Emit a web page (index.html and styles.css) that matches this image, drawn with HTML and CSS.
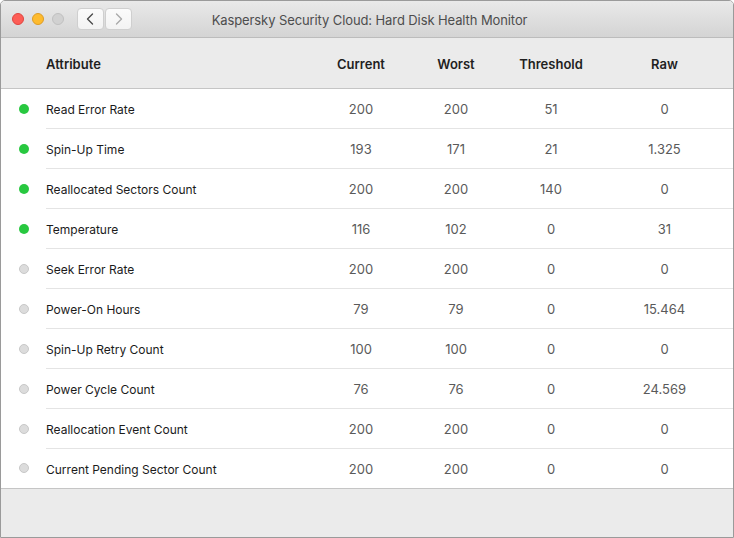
FILE: index.html
```html
<!DOCTYPE html>
<html lang="en">
<head>
<meta charset="utf-8">
<title>Kaspersky Security Cloud: Hard Disk Health Monitor</title>
<link rel="stylesheet" href="styles.css">
</head>
<body>
<div class="window">
  <div class="titlebar">
    <div class="controls">
      <div class="lights">
        <span class="light red"></span>
        <span class="light yellow"></span>
        <span class="light gray"></span>
      </div>
      <div class="nav">
        <span class="navbtn">
          <svg width="27" height="22" viewBox="0 0 27 22"><path d="M15.5 6 L10.5 11 L15.5 16" fill="none" stroke="#4a4a4a" stroke-width="1.4" stroke-linecap="round" stroke-linejoin="round"/></svg>
        </span>
        <span class="navbtn">
          <svg width="27" height="22" viewBox="0 0 27 22"><path d="M11.5 6 L16.5 11 L11.5 16" fill="none" stroke="#a9a9a9" stroke-width="1.4" stroke-linecap="round" stroke-linejoin="round"/></svg>
        </span>
      </div>
    </div>
    <div class="title">Kaspersky Security Cloud: Hard Disk Health Monitor</div>
    <div></div>
  </div>

  <div class="thead">
    <div class="dotcell"></div>
    <div class="cells">
      <div class="c attr">Attribute</div>
      <div class="c num">Current</div>
      <div class="c num">Worst</div>
      <div class="c num">Threshold</div>
      <div class="c num">Raw</div>
    </div>
  </div>

  <div class="tbody">
    <div class="row"><div class="dotcell"><span class="dot ok"></span></div><div class="cells"><div class="c attr">Read Error Rate</div><div class="c num">200</div><div class="c num">200</div><div class="c num">51</div><div class="c num">0</div></div></div>
    <div class="row"><div class="dotcell"><span class="dot ok"></span></div><div class="cells"><div class="c attr">Spin-Up Time</div><div class="c num">193</div><div class="c num">171</div><div class="c num">21</div><div class="c num">1.325</div></div></div>
    <div class="row"><div class="dotcell"><span class="dot ok"></span></div><div class="cells"><div class="c attr">Reallocated Sectors Count</div><div class="c num">200</div><div class="c num">200</div><div class="c num">140</div><div class="c num">0</div></div></div>
    <div class="row"><div class="dotcell"><span class="dot ok"></span></div><div class="cells"><div class="c attr">Temperature</div><div class="c num">116</div><div class="c num">102</div><div class="c num">0</div><div class="c num">31</div></div></div>
    <div class="row"><div class="dotcell"><span class="dot off"></span></div><div class="cells"><div class="c attr">Seek Error Rate</div><div class="c num">200</div><div class="c num">200</div><div class="c num">0</div><div class="c num">0</div></div></div>
    <div class="row"><div class="dotcell"><span class="dot off"></span></div><div class="cells"><div class="c attr">Power-On Hours</div><div class="c num">79</div><div class="c num">79</div><div class="c num">0</div><div class="c num">15.464</div></div></div>
    <div class="row"><div class="dotcell"><span class="dot off"></span></div><div class="cells"><div class="c attr">Spin-Up Retry Count</div><div class="c num">100</div><div class="c num">100</div><div class="c num">0</div><div class="c num">0</div></div></div>
    <div class="row"><div class="dotcell"><span class="dot off"></span></div><div class="cells"><div class="c attr">Power Cycle Count</div><div class="c num">76</div><div class="c num">76</div><div class="c num">0</div><div class="c num">24.569</div></div></div>
    <div class="row"><div class="dotcell"><span class="dot off"></span></div><div class="cells"><div class="c attr">Reallocation Event Count</div><div class="c num">200</div><div class="c num">200</div><div class="c num">0</div><div class="c num">0</div></div></div>
    <div class="row last"><div class="dotcell"><span class="dot off"></span></div><div class="cells"><div class="c attr">Current Pending Sector Count</div><div class="c num">200</div><div class="c num">200</div><div class="c num">0</div><div class="c num">0</div></div></div>
  </div>

  <div class="footer"></div>
</div>
</body>
</html>
```

FILE: styles.css
```css
* { box-sizing: border-box; }
html, body {
  margin: 0;
  padding: 0;
  width: 734px;
  height: 538px;
  overflow: hidden;
  background: #ffffff;
}
body {
  font-family: Inter, "Liberation Sans", sans-serif;
  color: #1e1e1e;
}
.window {
  width: 734px;
  height: 538px;
  border: 1px solid #9a9a9a;
  border-radius: 5px 5px 0 0;
  display: flex;
  flex-direction: column;
  overflow: hidden;
  background: #fff;
}
.titlebar {
  height: 37px;
  flex: none;
  border-bottom: 1px solid #bcbcbc;
  background: linear-gradient(#e9e9e9, #d4d4d4);
  display: grid;
  grid-template-columns: 1fr auto 1fr;
  align-items: center;
}
.controls {
  display: flex;
  align-items: center;
  padding-left: 11px;
}
.lights {
  display: flex;
  gap: 8px;
}
.light {
  width: 12px;
  height: 12px;
  border-radius: 50%;
  display: block;
}
.red { background: #fd5d56; border: 0.5px solid #df4540; }
.yellow { background: #febb2e; border: 0.5px solid #dd9c26; }
.gray { background: #d1d1d1; border: 0.5px solid #c0c0c0; }
.nav {
  display: flex;
  gap: 1px;
  margin-left: 13px;
}
.navbtn {
  width: 27px;
  height: 22px;
  display: block;
  background: linear-gradient(#fbfbfb, #f3f3f3);
  border: 1px solid #cfcfcf;
  border-radius: 4px;
  position: relative;
}
.navbtn svg {
  position: absolute;
  left: -1px;
  top: -1px;
}
.title {
  font-size: 13px;
  color: #4d4d4d;
  letter-spacing: -0.1px;
  padding-top: 1px;
  margin-left: 5px;
}
.thead {
  height: 51px;
  flex: none;
  display: flex;
  background: #ebebeb;
  border-bottom: 1px solid #c5c5c5;
}
.thead .cells {
  font-weight: 600;
  font-size: 13px;
  color: #1f1f1f;
  padding-top: 2px;
}
.dotcell {
  width: 45px;
  flex: none;
  display: flex;
  align-items: center;
  justify-content: center;
}
.cells {
  flex: 1;
  display: grid;
  grid-template-columns: 268px 94px 96px 94px 1fr;
  align-items: center;
}
.c.num { text-align: center; }
.row {
  height: 40px;
  flex: none;
  display: flex;
}
.row .cells {
  border-bottom: 1px solid #e4e4e4;
  padding-top: 1px;
}
.row.last .cells { border-bottom: none; }
.row.last { border-bottom: 1px solid #c5c5c5; }
.row .attr {
  font-size: 12px;
  color: #1b1b1b;
}
.row .num {
  font-size: 13px;
  color: #5a5a5a;
}
.cells .c:last-child { padding-right: 2px; }
.dot {
  width: 10px;
  height: 10px;
  border-radius: 50%;
  display: block;
  margin-left: 1px;
  margin-bottom: 1px;
}
.dot.ok { background: #28c840; }
.dot.off { background: #dcdcdc; border: 0.5px solid #c8c8c8; }
.footer {
  flex: 1;
  background: #ebebeb;
}
```
